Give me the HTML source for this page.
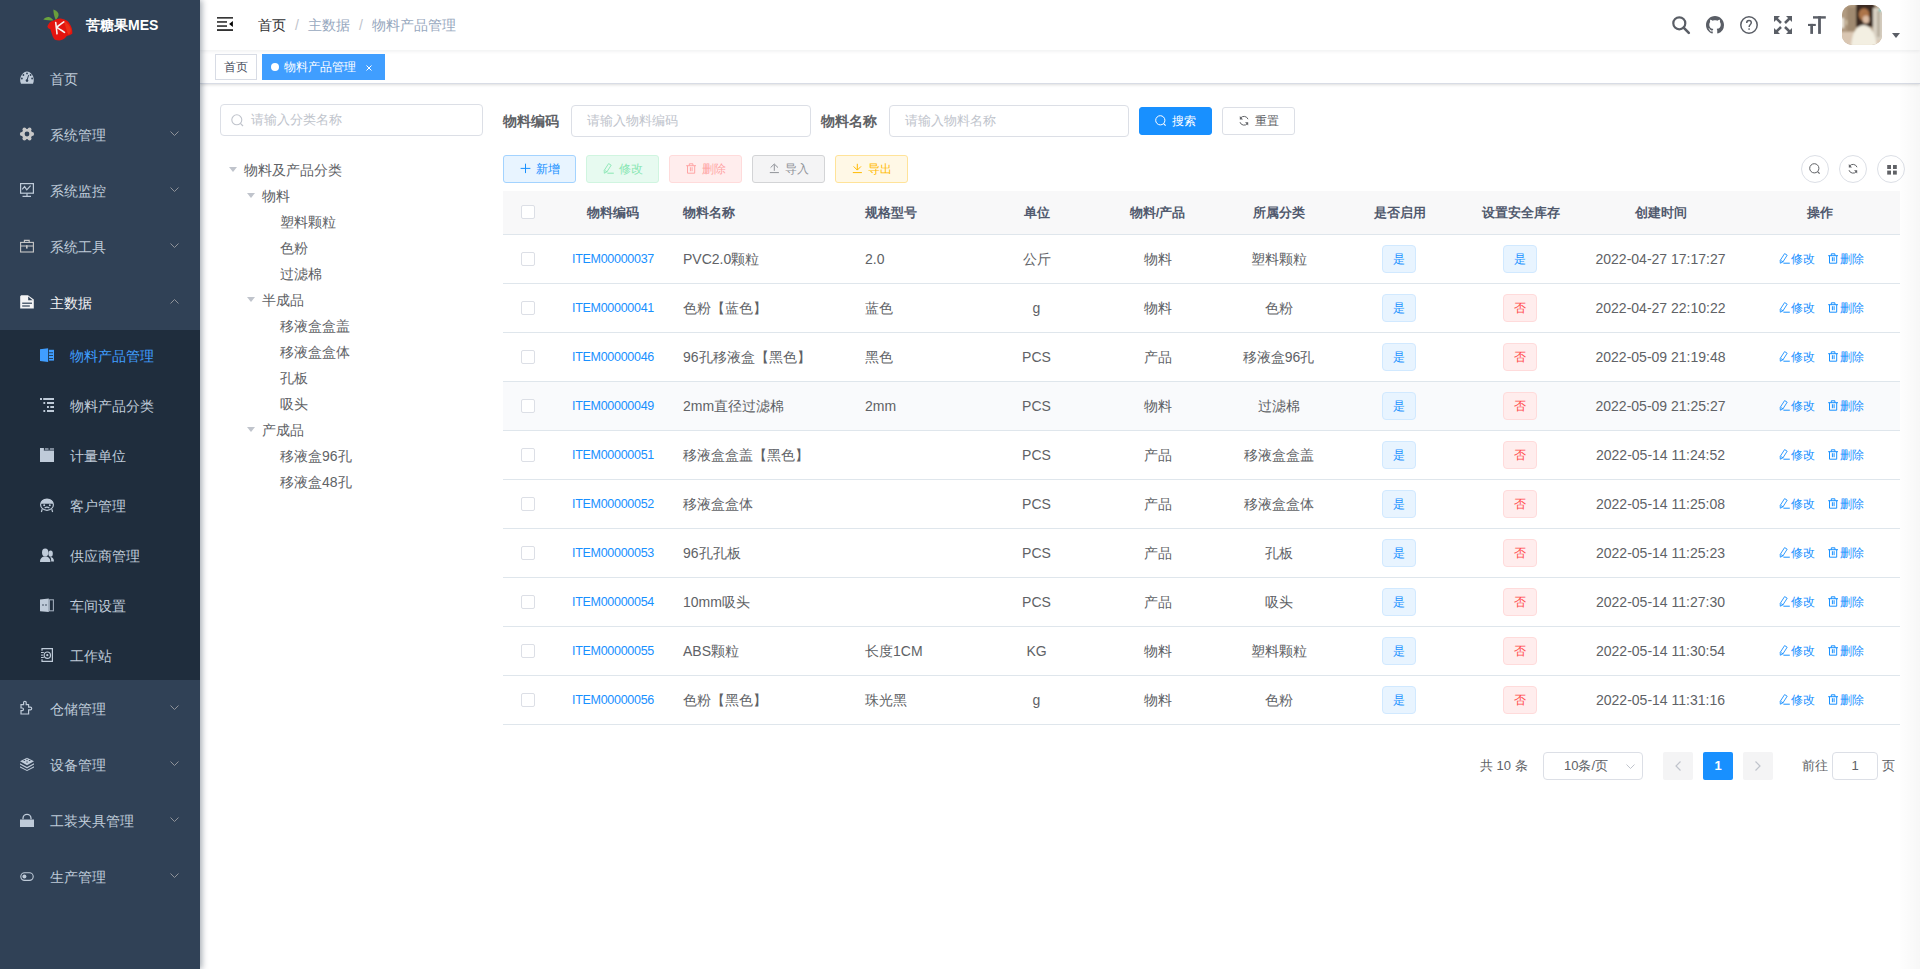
<!DOCTYPE html><html><head><meta charset="utf-8"><style>
*{box-sizing:border-box;margin:0;padding:0}
html,body{width:1920px;height:969px;overflow:hidden;background:#fff;font-family:"Liberation Sans",sans-serif;font-size:14px;color:#606266}
.abs{position:absolute}
svg{display:block;overflow:visible}
#sb{position:absolute;left:0;top:0;width:200px;height:969px;background:#304156;box-shadow:2px 0 6px rgba(0,21,41,.35);z-index:10}
.logo .t{position:absolute;left:86px;top:0;line-height:50px;color:#fff;font-weight:bold;font-size:14px}
.mi{position:absolute;left:0;width:200px;height:56px;line-height:56px;color:#bfcbd9;font-size:14px}
.mi svg.ic{position:absolute;left:20px;width:14px;height:14px}
.mi .tx{position:absolute;left:50px;top:1px}
.mi svg.ar{position:absolute;left:170px;top:25px;width:9px;height:5px}
.sub{position:absolute;left:0;top:330px;width:200px;height:350px;background:#1f2d3d}
.si{position:absolute;left:0;width:200px;height:50px;line-height:50px;color:#bfcbd9}
.si svg.ic{position:absolute;left:40px;top:18px;width:14px;height:14px}
.si .tx{position:absolute;left:70px;top:1px}
.si.act{color:#409eff}
#nav{position:absolute;left:200px;top:0;width:1720px;height:50px;background:#fff;box-shadow:0 1px 4px rgba(0,21,41,.08);z-index:5}
#nav .bc{position:absolute;top:0;line-height:50px;font-size:14px}
#tags{position:absolute;left:200px;top:50px;width:1720px;height:34px;background:#fff;border-bottom:1px solid #d8dce5;box-shadow:0 1px 3px 0 rgba(0,0,0,.12),0 0 3px 0 rgba(0,0,0,.04);z-index:4}
.tag{position:absolute;top:4px;height:26px;line-height:24px;border:1px solid #d8dce5;color:#495060;background:#fff;font-size:12px;padding:0 8px;white-space:nowrap}
.tag.act{background:#409eff;border-color:#409eff;color:#fff;padding-left:21px}
.tag.act:before{content:"";position:absolute;left:8px;top:8px;width:8px;height:8px;border-radius:50%;background:#fff}
.inp{position:absolute;height:32px;border:1px solid #dcdfe6;border-radius:4px;background:#fff;color:#c0c4cc;font-size:13px;line-height:30px;white-space:nowrap}
.lbl{position:absolute;height:32px;line-height:32px;font-weight:bold;color:#606266;font-size:14px}
.btn{position:absolute;height:28px;border:1px solid;border-radius:3px;font-size:12px;line-height:26px;white-space:nowrap}
.btn svg{position:absolute;top:7px;width:12px;height:12px}
.btn .bt{position:absolute;top:0}
.tn{position:absolute;height:26px;line-height:26px;font-size:14px;color:#606266;white-space:nowrap}
.tn svg{position:absolute;top:10px;width:8px;height:6px}
.th{position:absolute;top:191px;height:44px;background:#f8f8f9;border-bottom:1px solid #dfe6ec}
.cell{position:absolute;white-space:nowrap}
.hc{font-weight:bold;color:#515a6e;font-size:13px;line-height:43px;top:0}
.row{position:absolute;left:503px;width:1397px;height:49px;border-bottom:1px solid #dfe6ec;background:#fff}
.row .cell{top:0;line-height:48px;font-size:14px;color:#606266}
.cb{position:absolute;width:14px;height:14px;border:1px solid #dcdfe6;border-radius:2px;background:#fff}
.etag{position:absolute;top:10px;height:28px;width:34px;line-height:26px;text-align:center;font-size:12px;border:1px solid;border-radius:4px}
.etag.p{background:#e8f4ff;border-color:#d1e9ff;color:#1890ff}
.etag.d{background:#ffeded;border-color:#ffdbdb;color:#ff4949}
.lnk{position:absolute;top:0;line-height:48px;font-size:12px;color:#1890ff;white-space:nowrap}
.lnk svg{position:absolute;top:18px;width:12px;height:12px}
.num{letter-spacing:-0.55px}
.circ{position:absolute;top:155px;width:28px;height:28px;border:1px solid #dcdfe6;border-radius:50%;background:#fff}
.circ svg{position:absolute;left:7px;top:7px;width:12px;height:12px}
.pg{position:absolute;top:752px;height:28px;line-height:28px;font-size:13px;color:#606266;white-space:nowrap}
</style></head><body>
<div id="sb"><div class="logo">
<svg class="abs" style="left:42px;top:9px;width:32px;height:32px;filter:blur(0.25px)" viewBox="0 0 32 32">
<path d="M13.6 10.8 C12.4 7.5 11.2 4 11.4 0.6 C14.5 1.8 16.8 3.8 16.6 6 C16.4 8.2 15 9.8 13.6 10.8Z" fill="#6a9e3c"/>
<path d="M11.4 11.6 C8.5 11.4 4.5 11.6 1.3 10.6 C2.8 8.4 5.4 7.6 7.6 8.2 C9.4 8.8 10.6 10.2 11.4 11.6Z" fill="#6aa23e"/>
<path d="M5.4 17.3 C6.2 15.6 7 14.2 7.7 13.6 C8.6 12.8 9.4 12.4 10.3 12.1 C12 11.4 13.6 10.6 15.1 9.9 C16.4 9.5 17.6 9.3 18.8 9.5 C21.4 9.9 23.8 10.8 25.5 12.1 C27.4 14 28.8 16.4 29.6 18.8 C30.2 20.8 30.5 23 30.3 24.8 C28.6 26 26.6 26.6 24.8 27 C23.8 28.2 22.8 29.2 21.8 30 C20.4 30.9 18.8 31.4 17.3 31.5 C15.6 31.5 14.2 31.2 12.9 30.7 C11.6 29.4 10.8 28 10.3 26.3 C9.6 24.4 9 22.2 8.4 20.3 C7.6 19.9 6.8 19.6 6.2 19.2 C5.8 18.6 5.5 18 5.4 17.3Z" fill="#e3150f"/>
<path d="M22 12 C25 13.4 28 16.5 28.8 20 C29.2 22.5 28.4 24.6 26.4 25.6 C24.6 22 23.4 17 22 12Z" fill="#ee3a1a" opacity=".7"/>
<path d="M13.7 13.6 C14.2 17 14.6 21 15 24.8 M14.7 18.2 C17 16.6 19.4 14.6 21.8 12.9 M15.6 18.8 C17.8 20.2 20.2 21.8 22.5 23.3" stroke="#f8f2f0" stroke-width="1.6" fill="none" stroke-linecap="round"/>
</svg>
<div class="t">苦糖果MES</div></div>
<div class="mi" style="top:50px"><svg class="ic" viewBox="0 0 14 14" style="top:21px"><path d="M1 12.8 C-0.4 10 0 6 2 3.6 C3.5 1.6 5.2 0.6 7 0.6 C8.8 0.6 10.5 1.6 12 3.6 C14 6 14.4 10 13 12.8 Z" fill="#bfcbd9"/><circle cx="3.4" cy="4" r="0.9" fill="#304156"/><circle cx="7" cy="2.4" r="0.9" fill="#304156"/><circle cx="10.6" cy="4" r="0.9" fill="#304156"/><circle cx="1.9" cy="7.5" r="0.9" fill="#304156"/><circle cx="12.1" cy="7.5" r="0.9" fill="#304156"/><path d="M7 9.3 L8.6 4.2" stroke="#304156" stroke-width="1"/><circle cx="7" cy="9.6" r="1.3" fill="#304156"/></svg><span class="tx">首页</span></div>
<div class="mi" style="top:106px"><svg class="ic" viewBox="0 0 14 14" style="top:21px"><g fill="#c8c8c8"><circle cx="12.20" cy="7.00" r="1.9"/><circle cx="9.60" cy="11.50" r="1.9"/><circle cx="4.40" cy="11.50" r="1.9"/><circle cx="1.80" cy="7.00" r="1.9"/><circle cx="4.40" cy="2.50" r="1.9"/><circle cx="9.60" cy="2.50" r="1.9"/><circle cx="7" cy="7" r="5.3"/></g><circle cx="7" cy="7" r="2.4" fill="#304156"/></svg><span class="tx">系统管理</span><svg class="ar" viewBox="0 0 9 5" style=""><path d="M0.5 0.5L4.5 4.5L8.5 0.5" fill="none" stroke="#909399" stroke-width="1"/></svg></div>
<div class="mi" style="top:162px"><svg class="ic" viewBox="0 0 14 14" style="top:21px"><g fill="none" stroke="#bfcbd9" stroke-width="1.2"><rect x="0.6" y="0.6" width="12.8" height="9.6"/><path d="M7 10.2V13.3M2.5 13.3H11"/><path d="M2.2 6.4L4.6 3.6L6.8 6.8L10.6 2.6"/></g></svg><span class="tx">系统监控</span><svg class="ar" viewBox="0 0 9 5" style=""><path d="M0.5 0.5L4.5 4.5L8.5 0.5" fill="none" stroke="#909399" stroke-width="1"/></svg></div>
<div class="mi" style="top:218px"><svg class="ic" viewBox="0 0 14 14" style="top:21px"><g fill="none" stroke="#c8c8c8" stroke-width="1.1"><rect x="0.6" y="3.4" width="12.8" height="9.6"/><path d="M4.4 3.4V1.4H9.2V3.4M0.6 7H13.4"/></g><rect x="6" y="6.2" width="1.6" height="3.4" fill="#c8c8c8"/></svg><span class="tx">系统工具</span><svg class="ar" viewBox="0 0 9 5" style=""><path d="M0.5 0.5L4.5 4.5L8.5 0.5" fill="none" stroke="#909399" stroke-width="1"/></svg></div>
<div class="mi" style="top:274px;color:#f4f4f5"><svg class="ic" viewBox="0 0 14 14" style="top:21px"><path d="M1.2 0.2H8L13.8 4.6V13.6H0.2V1.2Z" fill="#f4f4f5"/><path d="M8.2 1.5V5.2H12.6Z" fill="#304156"/><rect x="2.2" y="7.6" width="9.8" height="1.2" fill="#304156"/><rect x="2.2" y="10.4" width="7.6" height="1.2" fill="#304156"/></svg><span class="tx">主数据</span><svg class="ar" viewBox="0 0 9 5" style=""><path d="M0.5 4.5L4.5 0.5L8.5 4.5" fill="none" stroke="#909399" stroke-width="1"/></svg></div>
<div class="sub">
<div class="si act" style="top:0px"><svg class="ic" viewBox="0 0 14 14" style=""><g fill="#409eff"><path d="M0 1.3L8.1 0.2V14L0 12.9Z"/><rect x="8.9" y="1.8" width="5.1" height="10.8"/></g><g fill="#1f2d3d"><rect x="9" y="4.4" width="4" height="0.8"/><rect x="9" y="7.2" width="4" height="0.8"/><rect x="9" y="10.1" width="4" height="0.8"/></g></svg><span class="tx">物料产品管理</span></div>
<div class="si" style="top:50px"><svg class="ic" viewBox="0 0 14 14" style=""><g fill="#bfcbd9"><rect x="0" y="0" width="2" height="2"/><rect x="3.2" y="0" width="10.8" height="2"/><rect x="3.4" y="4" width="1.8" height="2"/><rect x="7" y="4" width="7" height="2"/><rect x="7" y="8" width="1.9" height="2"/><rect x="10.3" y="8" width="3.7" height="2"/><rect x="3.4" y="12" width="1.8" height="2"/><rect x="7" y="12" width="7" height="2"/></g></svg><span class="tx">物料产品分类</span></div>
<div class="si" style="top:100px"><svg class="ic" viewBox="0 0 14 14" style=""><g fill="#bfcbd9"><path d="M0 0H3.9V3H14V14H0Z"/><rect x="4.9" y="0.4" width="3.6" height="1.2"/><rect x="9.9" y="0.4" width="4.1" height="1.2"/></g><rect x="4.1" y="1.8" width="9.9" height="1.2" fill="#6b7888"/></svg><span class="tx">计量单位</span></div>
<div class="si" style="top:150px"><svg class="ic" viewBox="0 0 14 14" style=""><g fill="none" stroke="#bfcbd9" stroke-width="1.2"><ellipse cx="7" cy="6.7" rx="6.4" ry="5.6"/><path d="M2.2 11.2L1.4 14M11.8 11.2L12.6 14"/></g><path d="M0.7 5.8C0.9 2.8 3.6 1.1 7 1.1S13.1 2.8 13.3 5.8Z" fill="#bfcbd9"/><circle cx="4.2" cy="7.2" r="1" fill="#bfcbd9"/><circle cx="9.8" cy="7.2" r="1" fill="#bfcbd9"/><path d="M4.6 10C6 9 8 9 9.4 10" stroke="#bfcbd9" stroke-width="1.1" fill="none"/></svg><span class="tx">客户管理</span></div>
<div class="si" style="top:200px"><svg class="ic" viewBox="0 0 14 14" style=""><g fill="#bfcbd9"><ellipse cx="5.2" cy="4.4" rx="3.2" ry="4"/><path d="M0 14C0 10.5 2 8.6 5.2 8.6S10.4 10.5 10.4 14Z"/><ellipse cx="10.6" cy="5.6" rx="2.2" ry="3.2"/><path d="M10 8.8C12.4 9 14 10.6 14 13.4H11.2C11.2 11.2 10.8 9.8 10 8.8Z"/></g></svg><span class="tx">供应商管理</span></div>
<div class="si" style="top:250px"><svg class="ic" viewBox="0 0 14 14" style=""><path d="M0 1.6L8.8 0.4V14L0 13.2Z" fill="#bfcbd9"/><rect x="9.4" y="1.8" width="4" height="11" fill="none" stroke="#bfcbd9" stroke-width="1.1" opacity="0.8"/><circle cx="3" cy="7" r="1" fill="#6b7888"/><circle cx="6" cy="7" r="1" fill="#6b7888"/></svg><span class="tx">车间设置</span></div>
<div class="si" style="top:300px"><svg class="ic" viewBox="0 0 14 14" style=""><g fill="none" stroke="#bfcbd9" stroke-width="1.2"><path d="M2 2.8V0.6H12.4V13.4H2V11.2"/><circle cx="7.3" cy="7.2" r="3.2"/></g><g fill="#bfcbd9"><rect x="1" y="4" width="2.8" height="1"/><rect x="1" y="6.6" width="2" height="1"/><rect x="1" y="9" width="2.8" height="1"/><circle cx="7.3" cy="7.2" r="1.1"/></g></svg><span class="tx">工作站</span></div>
</div>
<div class="mi" style="top:680px"><svg class="ic" viewBox="0 0 14 14" style="top:21px"><path d="M1 3.6H3.6V1.6A1.3 1.3 0 0 1 6.2 1.6V3.6H8.6V6.2H10.4A1.3 1.3 0 0 1 10.4 8.8H8.6V13H1V9.6H2.2A1.3 1.3 0 0 0 2.2 7H1Z" fill="none" stroke="#bfcbd9" stroke-width="1.2"/></svg><span class="tx">仓储管理</span><svg class="ar" viewBox="0 0 9 5" style=""><path d="M0.5 0.5L4.5 4.5L8.5 0.5" fill="none" stroke="#909399" stroke-width="1"/></svg></div>
<div class="mi" style="top:736px"><svg class="ic" viewBox="0 0 14 14" style="top:21px"><g fill="#bfcbd9"><path d="M7 0.8L14 4.2L7 8.2L0 4.2Z"/><path d="M0 6.2L7 10L14 6.2V7.6L7 11.4L0 7.6Z"/><path d="M0 9.2L7 13L14 9.2V10.6L7 14L0 10.6Z"/></g><g fill="#304156"><ellipse cx="4.3" cy="3.6" rx="0.9" ry="0.5"/><ellipse cx="9.6" cy="3.6" rx="0.9" ry="0.5"/><ellipse cx="7" cy="2.3" rx="0.9" ry="0.5"/><ellipse cx="7" cy="4.9" rx="0.9" ry="0.5"/></g></svg><span class="tx">设备管理</span><svg class="ar" viewBox="0 0 9 5" style=""><path d="M0.5 0.5L4.5 4.5L8.5 0.5" fill="none" stroke="#909399" stroke-width="1"/></svg></div>
<div class="mi" style="top:792px"><svg class="ic" viewBox="0 0 14 14" style="top:21px"><path d="M3 6.2V5.3A4 4 0 0 1 11 5.3V6.2" fill="none" stroke="#bfcbd9" stroke-width="1.3"/><rect x="0" y="6.5" width="14" height="7.5" fill="#bfcbd9"/></svg><span class="tx">工装夹具管理</span><svg class="ar" viewBox="0 0 9 5" style=""><path d="M0.5 0.5L4.5 4.5L8.5 0.5" fill="none" stroke="#909399" stroke-width="1"/></svg></div>
<div class="mi" style="top:848px"><svg class="ic" viewBox="0 0 14 14" style="top:21px"><rect x="0.8" y="3.8" width="12.4" height="7.6" rx="3.8" fill="none" stroke="#bfcbd9" stroke-width="1.1"/><circle cx="4.4" cy="7.6" r="2" fill="#bfcbd9"/></svg><span class="tx">生产管理</span><svg class="ar" viewBox="0 0 9 5" style=""><path d="M0.5 0.5L4.5 4.5L8.5 0.5" fill="none" stroke="#909399" stroke-width="1"/></svg></div>
</div>
<div id="nav">
<svg class="abs" style="left:17px;top:17px;width:17px;height:14px" viewBox="0 0 17 14"><g fill="#222"><rect x="0" y="0.1" width="16" height="1.5"/><rect x="0" y="4.2" width="10" height="1.5"/><rect x="0" y="8.3" width="10" height="1.5"/><rect x="0" y="12.3" width="16" height="1.5" fill="#000"/><path d="M15.9 4.1V10L12.1 7Z" fill="#000"/></g></svg>
<span class="bc" style="left:58px;color:#303133">首页</span>
<span class="bc" style="left:95px;color:#c0c4cc">/</span>
<span class="bc" style="left:108px;color:#97a8be">主数据</span>
<span class="bc" style="left:159px;color:#c0c4cc">/</span>
<span class="bc" style="left:172px;color:#97a8be">物料产品管理</span>
<svg class="abs" style="left:1472px;top:16px;width:18px;height:18px" viewBox="0 0 18 18"><circle cx="7.3" cy="7.3" r="6" fill="none" stroke="#5a5e66" stroke-width="2.2"/><path d="M11.6 11.6L16.8 16.8" stroke="#5a5e66" stroke-width="2.6" stroke-linecap="round"/></svg>
<svg class="abs" style="left:1506px;top:16px;width:18px;height:18px" viewBox="0 0 16 16"><path fill="#5a5e66" d="M8 0C3.58 0 0 3.58 0 8c0 3.54 2.29 6.53 5.47 7.59.4.07.55-.17.55-.38 0-.19-.01-.82-.01-1.49-2.01.37-2.53-.49-2.69-.94-.09-.23-.48-.94-.82-1.13-.28-.15-.68-.52-.01-.53.63-.01 1.08.58 1.23.82.72 1.21 1.87.87 2.33.66.07-.52.28-.87.51-1.07-1.78-.2-3.64-.89-3.64-3.95 0-.87.31-1.59.82-2.15-.08-.2-.36-1.02.08-2.12 0 0 .67-.21 2.2.82.64-.18 1.32-.27 2-.27.68 0 1.36.09 2 .27 1.53-1.04 2.2-.82 2.2-.82.44 1.1.16 1.92.08 2.12.51.56.82 1.27.82 2.15 0 3.07-1.87 3.75-3.65 3.95.29.25.54.73.54 1.48 0 1.07-.01 1.93-.01 2.2 0 .21.15.46.55.38A8.013 8.013 0 0016 8c0-4.42-3.58-8-8-8z"/></svg>
<svg class="abs" style="left:1540px;top:16px;width:18px;height:18px" viewBox="0 0 18 18"><circle cx="9" cy="9" r="8.2" fill="none" stroke="#5a5e66" stroke-width="1.5"/><path d="M6.7 6.9C6.7 5.4 7.8 4.5 9 4.5S11.3 5.4 11.3 6.7C11.3 8.4 9.1 8.5 9.1 11" fill="none" stroke="#5a5e66" stroke-width="1.45"/><rect x="8.3" y="12.4" width="1.6" height="1.3" fill="#5a5e66"/></svg>
<svg class="abs" style="left:1574px;top:16px;width:18px;height:18px" viewBox="0 0 18 18"><g fill="#5a5e66"><path d="M0 0H6L0 6Z"/><path d="M18 0H12L18 6Z"/><path d="M0 18H6L0 12Z"/><path d="M18 18H12L18 12Z"/></g><path d="M2 2L7 7M16 2L11 7M2 16L7 11M16 16L11 11" stroke="#5a5e66" stroke-width="2.5"/></svg>
<svg class="abs" style="left:1608px;top:16px;width:18px;height:18px" viewBox="0 0 18 18"><g fill="#5a5e66"><rect x="5" y="0.2" width="12.8" height="2.4"/><rect x="10.1" y="0.2" width="2.8" height="17.7"/><rect x="0" y="7.9" width="7.8" height="2.1"/><rect x="2.3" y="7.9" width="2.7" height="10"/></g></svg>
<div class="abs" style="left:1642px;top:5px;width:40px;height:40px;border-radius:10px;overflow:hidden;background:#b9a48c">
<svg viewBox="0 0 40 40" width="40" height="40" style="display:block">
<defs><filter id="bl" x="-20%" y="-20%" width="140%" height="140%"><feGaussianBlur stdDeviation="1.1"/></filter></defs>
<g filter="url(#bl)">
<rect x="-5" y="-5" width="50" height="50" fill="#b09a80"/>
<rect x="-5" y="27" width="50" height="20" fill="#d9c6b2"/>
<rect x="-5" y="13" width="7" height="10" fill="#ece6da"/>
<rect x="4" y="15" width="4" height="5" fill="#e8dcc0"/>
<rect x="5" y="2" width="9" height="24" fill="#a08a70"/>
<rect x="14" y="-5" width="19" height="27" fill="#3a2c20"/>
<rect x="-5" y="-5" width="50" height="3" fill="#1e1610"/>
<rect x="31" y="3" width="10" height="32" fill="#d8d0c2"/>
<rect x="35.5" y="6" width="2" height="26" fill="#aaa08e"/>
<ellipse cx="22" cy="9.5" rx="5.2" ry="6.2" fill="#ad7448"/>
<ellipse cx="24" cy="14.5" rx="3.4" ry="4" fill="#dcbba2"/>
<path d="M9 41 C10 30 13 21 21 20 C29 20 33 28 35 41Z" fill="#f3efe2"/>
<circle cx="38.5" cy="5" r="1.4" fill="#40d0d0"/>
</g></svg></div>
<svg class="abs" style="left:1692px;top:33px;width:8px;height:5px" viewBox="0 0 8 5"><path d="M0 0H8L4 5Z" fill="#5a5e66"/></svg>
</div>
<div id="tags"><div class="tag" style="left:15px">首页</div><div class="tag act" style="left:62px;width:123px">物料产品管理<svg class="abs" style="left:103px;top:10px;width:6px;height:6px" viewBox="0 0 6 6"><path d="M0.5 0.5L5.5 5.5M5.5 0.5L0.5 5.5" stroke="#fff" stroke-width="1"/></svg></div></div>
<div class="inp" style="left:220px;top:104px;width:263px;padding-left:30px">请输入分类名称<svg class="abs" style="left:10px;top:9px;width:13px;height:13px" viewBox="0 0 13 13"><circle cx="5.8" cy="5.8" r="5" fill="none" stroke="#c0c4cc" stroke-width="1.1"/><path d="M9.4 9.4L12 12" stroke="#c0c4cc" stroke-width="1.2"/></svg></div>
<div class="tn" style="left:244px;top:157px">物料及产品分类</div>
<svg class="abs" style="left:229px;top:167px;width:8px;height:5px" viewBox="0 0 8 5"><path d="M0 0H8L4 5Z" fill="#c0c4cc"/></svg>
<div class="tn" style="left:262px;top:183px">物料</div>
<svg class="abs" style="left:247px;top:193px;width:8px;height:5px" viewBox="0 0 8 5"><path d="M0 0H8L4 5Z" fill="#c0c4cc"/></svg>
<div class="tn" style="left:280px;top:209px">塑料颗粒</div>
<div class="tn" style="left:280px;top:235px">色粉</div>
<div class="tn" style="left:280px;top:261px">过滤棉</div>
<div class="tn" style="left:262px;top:287px">半成品</div>
<svg class="abs" style="left:247px;top:297px;width:8px;height:5px" viewBox="0 0 8 5"><path d="M0 0H8L4 5Z" fill="#c0c4cc"/></svg>
<div class="tn" style="left:280px;top:313px">移液盒盒盖</div>
<div class="tn" style="left:280px;top:339px">移液盒盒体</div>
<div class="tn" style="left:280px;top:365px">孔板</div>
<div class="tn" style="left:280px;top:391px">吸头</div>
<div class="tn" style="left:262px;top:417px">产成品</div>
<svg class="abs" style="left:247px;top:427px;width:8px;height:5px" viewBox="0 0 8 5"><path d="M0 0H8L4 5Z" fill="#c0c4cc"/></svg>
<div class="tn" style="left:280px;top:443px">移液盒96孔</div>
<div class="tn" style="left:280px;top:469px">移液盒48孔</div>
<div class="lbl" style="left:503px;top:105px">物料编码</div>
<div class="inp" style="left:571px;top:105px;width:240px;padding-left:15px">请输入物料编码</div>
<div class="lbl" style="left:821px;top:105px">物料名称</div>
<div class="inp" style="left:889px;top:105px;width:240px;padding-left:15px">请输入物料名称</div>
<div class="btn" style="left:1139px;top:107px;width:73px;background:#1890ff;border-color:#1890ff;color:#fff"><svg viewBox="0 0 12 12" style="left:15px"><circle cx="5.3" cy="5.3" r="4.6" fill="none" stroke="#fff" stroke-width="1"/><path d="M8.6 8.6L10.6 10.6" stroke="#fff" stroke-width="1.1"/></svg><span class="bt" style="left:32px">搜索</span></div>
<div class="btn" style="left:1222px;top:107px;width:73px;background:#fff;border-color:#dcdfe6;color:#606266"><svg viewBox="0 0 12 12" style="left:15px"><path d="M10 4.2A4.3 4.3 0 0 0 2.6 3" fill="none" stroke="#606266" stroke-width="1"/><path d="M2 7.2A4.3 4.3 0 0 0 9.4 8.6" fill="none" stroke="#606266" stroke-width="1"/><path d="M1.8 1V4.4H5Z" fill="#606266"/><path d="M10.2 10.6V7.2H7Z" fill="#606266"/></svg><span class="bt" style="left:32px">重置</span></div>
<div class="btn" style="left:503px;top:155px;width:73px;background:#e8f4ff;border-color:#a3d3ff;color:#1890ff"><svg viewBox="0 0 12 12" style="left:15px"><path d="M6.5 0.7V10.1M1.6 5.4H11.4" stroke="#1890ff" stroke-width="1"/></svg><span class="bt" style="left:32px">新增</span></div>
<div class="btn" style="left:586px;top:155px;width:73px;background:#e7faf0;border-color:#d0f5e0;color:#89e7b3"><svg viewBox="0 0 12 12" style="left:15px"><path d="M2.3 10.2L2.2 7.4L6.6 0.6L9.2 2.2L4.8 9Z M2.8 7.6L5.2 8.8" fill="none" stroke="#89e7b3" stroke-width="0.9"/><path d="M5.4 10.2H11.8" stroke="#89e7b3" stroke-width="1"/></svg><span class="bt" style="left:32px">修改</span></div>
<div class="btn" style="left:669px;top:155px;width:73px;background:#ffeded;border-color:#ffdbdb;color:#ffa4a4"><svg viewBox="0 0 12 12" style="left:15px"><path d="M1.2 2.7H11M4.3 2.7V0.8H7.9V2.7M2.5 2.7V10.2H9.7V2.7M5.4 4.2V8.2M7.1 4.2V8.2" fill="none" stroke="#ffa4a4" stroke-width="1"/></svg><span class="bt" style="left:32px">删除</span></div>
<div class="btn" style="left:752px;top:155px;width:73px;background:#f4f4f5;border-color:#d3d4d6;color:#909399"><svg viewBox="0 0 12 12" style="left:15px"><path d="M6.3 1.4V7.8M2.6 4.6L6.3 1L10 4.6M1.8 9.6H10.9" fill="none" stroke="#909399" stroke-width="1"/></svg><span class="bt" style="left:32px">导入</span></div>
<div class="btn" style="left:835px;top:155px;width:73px;background:#fff8e6;border-color:#ffe399;color:#ffba00"><svg viewBox="0 0 12 12" style="left:15px"><path d="M6.3 0.8V7M2.6 3.4L6.3 7.1L10 3.4M1.8 9.6H10.9" fill="none" stroke="#ffba00" stroke-width="1"/></svg><span class="bt" style="left:32px">导出</span></div>
<div class="circ" style="left:1801px"><svg viewBox="0 0 12 12" style="left:7px"><circle cx="5.3" cy="5.3" r="4.6" fill="none" stroke="#606266" stroke-width="1"/><path d="M8.6 8.6L10.6 10.6" stroke="#606266" stroke-width="1.1"/></svg></div>
<div class="circ" style="left:1839px"><svg viewBox="0 0 12 12" style="left:7px"><path d="M10 4.2A4.3 4.3 0 0 0 2.6 3" fill="none" stroke="#606266" stroke-width="1"/><path d="M2 7.2A4.3 4.3 0 0 0 9.4 8.6" fill="none" stroke="#606266" stroke-width="1"/><path d="M1.8 1V4.4H5Z" fill="#606266"/><path d="M10.2 10.6V7.2H7Z" fill="#606266"/></svg></div>
<div class="circ" style="left:1877px"><svg viewBox="0 0 12 12" style="left:7px"><g fill="#606266"><rect x="2.2" y="2" width="3.8" height="4"/><rect x="8" y="2" width="3.8" height="4"/><rect x="2.2" y="7.6" width="3.8" height="4"/><rect x="8" y="7.6" width="3.8" height="4"/></g></svg></div>
<div class="th" style="left:503px;width:1397px">
<div class="cb" style="left:18.0px;top:14px"></div>
<div class="cell hc" style="left:50px;width:120px;text-align:center">物料编码</div>
<div class="cell hc" style="left:180px">物料名称</div>
<div class="cell hc" style="left:362px">规格型号</div>
<div class="cell hc" style="left:473px;width:121px;text-align:center">单位</div>
<div class="cell hc" style="left:594px;width:121px;text-align:center">物料/产品</div>
<div class="cell hc" style="left:715px;width:121px;text-align:center">所属分类</div>
<div class="cell hc" style="left:836px;width:121px;text-align:center">是否启用</div>
<div class="cell hc" style="left:957px;width:121px;text-align:center">设置安全库存</div>
<div class="cell hc" style="left:1078px;width:159px;text-align:center">创建时间</div>
<div class="cell hc" style="left:1237px;width:160px;text-align:center">操作</div>
</div>
<div class="row" style="top:235px">
<div class="cb" style="left:18.0px;top:17px"></div>
<div class="cell" style="left:50px;width:120px;text-align:center;color:#1890ff;font-size:12.5px;letter-spacing:-0.3px">ITEM00000037</div>
<div class="cell" style="left:180px">PVC2.0颗粒</div>
<div class="cell" style="left:362px">2.0</div>
<div class="cell" style="left:473px;width:121px;text-align:center">公斤</div>
<div class="cell" style="left:594px;width:121px;text-align:center">物料</div>
<div class="cell" style="left:715px;width:121px;text-align:center">塑料颗粒</div>
<div class="etag p" style="left:879px">是</div>
<div class="etag p" style="left:1000px">是</div>
<div class="cell" style="left:1078px;width:159px;text-align:center;font-size:14px">2022-04-27 17:17:27</div>
<div class="lnk" style="left:1275px"><svg viewBox="0 0 12 12" style="left:0"><path d="M2.3 10.2L2.2 7.4L6.6 0.6L9.2 2.2L4.8 9Z M2.8 7.6L5.2 8.8" fill="none" stroke="#1890ff" stroke-width="0.9"/><path d="M5.4 10.2H11.8" stroke="#1890ff" stroke-width="1"/></svg><span style="position:absolute;left:13px">修改</span></div>
<div class="lnk" style="left:1324px"><svg viewBox="0 0 12 12" style="left:0"><path d="M1.2 2.7H11M4.3 2.7V0.8H7.9V2.7M2.5 2.7V10.2H9.7V2.7M5.4 4.2V8.2M7.1 4.2V8.2" fill="none" stroke="#1890ff" stroke-width="1"/></svg><span style="position:absolute;left:13px">删除</span></div>
</div>
<div class="row" style="top:284px">
<div class="cb" style="left:18.0px;top:17px"></div>
<div class="cell" style="left:50px;width:120px;text-align:center;color:#1890ff;font-size:12.5px;letter-spacing:-0.3px">ITEM00000041</div>
<div class="cell" style="left:180px">色粉【蓝色】</div>
<div class="cell" style="left:362px">蓝色</div>
<div class="cell" style="left:473px;width:121px;text-align:center">g</div>
<div class="cell" style="left:594px;width:121px;text-align:center">物料</div>
<div class="cell" style="left:715px;width:121px;text-align:center">色粉</div>
<div class="etag p" style="left:879px">是</div>
<div class="etag d" style="left:1000px">否</div>
<div class="cell" style="left:1078px;width:159px;text-align:center;font-size:14px">2022-04-27 22:10:22</div>
<div class="lnk" style="left:1275px"><svg viewBox="0 0 12 12" style="left:0"><path d="M2.3 10.2L2.2 7.4L6.6 0.6L9.2 2.2L4.8 9Z M2.8 7.6L5.2 8.8" fill="none" stroke="#1890ff" stroke-width="0.9"/><path d="M5.4 10.2H11.8" stroke="#1890ff" stroke-width="1"/></svg><span style="position:absolute;left:13px">修改</span></div>
<div class="lnk" style="left:1324px"><svg viewBox="0 0 12 12" style="left:0"><path d="M1.2 2.7H11M4.3 2.7V0.8H7.9V2.7M2.5 2.7V10.2H9.7V2.7M5.4 4.2V8.2M7.1 4.2V8.2" fill="none" stroke="#1890ff" stroke-width="1"/></svg><span style="position:absolute;left:13px">删除</span></div>
</div>
<div class="row" style="top:333px">
<div class="cb" style="left:18.0px;top:17px"></div>
<div class="cell" style="left:50px;width:120px;text-align:center;color:#1890ff;font-size:12.5px;letter-spacing:-0.3px">ITEM00000046</div>
<div class="cell" style="left:180px">96孔移液盒【黑色】</div>
<div class="cell" style="left:362px">黑色</div>
<div class="cell" style="left:473px;width:121px;text-align:center">PCS</div>
<div class="cell" style="left:594px;width:121px;text-align:center">产品</div>
<div class="cell" style="left:715px;width:121px;text-align:center">移液盒96孔</div>
<div class="etag p" style="left:879px">是</div>
<div class="etag d" style="left:1000px">否</div>
<div class="cell" style="left:1078px;width:159px;text-align:center;font-size:14px">2022-05-09 21:19:48</div>
<div class="lnk" style="left:1275px"><svg viewBox="0 0 12 12" style="left:0"><path d="M2.3 10.2L2.2 7.4L6.6 0.6L9.2 2.2L4.8 9Z M2.8 7.6L5.2 8.8" fill="none" stroke="#1890ff" stroke-width="0.9"/><path d="M5.4 10.2H11.8" stroke="#1890ff" stroke-width="1"/></svg><span style="position:absolute;left:13px">修改</span></div>
<div class="lnk" style="left:1324px"><svg viewBox="0 0 12 12" style="left:0"><path d="M1.2 2.7H11M4.3 2.7V0.8H7.9V2.7M2.5 2.7V10.2H9.7V2.7M5.4 4.2V8.2M7.1 4.2V8.2" fill="none" stroke="#1890ff" stroke-width="1"/></svg><span style="position:absolute;left:13px">删除</span></div>
</div>
<div class="row" style="top:382px;background:#f9fafc">
<div class="cb" style="left:18.0px;top:17px"></div>
<div class="cell" style="left:50px;width:120px;text-align:center;color:#1890ff;font-size:12.5px;letter-spacing:-0.3px">ITEM00000049</div>
<div class="cell" style="left:180px">2mm直径过滤棉</div>
<div class="cell" style="left:362px">2mm</div>
<div class="cell" style="left:473px;width:121px;text-align:center">PCS</div>
<div class="cell" style="left:594px;width:121px;text-align:center">物料</div>
<div class="cell" style="left:715px;width:121px;text-align:center">过滤棉</div>
<div class="etag p" style="left:879px">是</div>
<div class="etag d" style="left:1000px">否</div>
<div class="cell" style="left:1078px;width:159px;text-align:center;font-size:14px">2022-05-09 21:25:27</div>
<div class="lnk" style="left:1275px"><svg viewBox="0 0 12 12" style="left:0"><path d="M2.3 10.2L2.2 7.4L6.6 0.6L9.2 2.2L4.8 9Z M2.8 7.6L5.2 8.8" fill="none" stroke="#1890ff" stroke-width="0.9"/><path d="M5.4 10.2H11.8" stroke="#1890ff" stroke-width="1"/></svg><span style="position:absolute;left:13px">修改</span></div>
<div class="lnk" style="left:1324px"><svg viewBox="0 0 12 12" style="left:0"><path d="M1.2 2.7H11M4.3 2.7V0.8H7.9V2.7M2.5 2.7V10.2H9.7V2.7M5.4 4.2V8.2M7.1 4.2V8.2" fill="none" stroke="#1890ff" stroke-width="1"/></svg><span style="position:absolute;left:13px">删除</span></div>
</div>
<div class="row" style="top:431px">
<div class="cb" style="left:18.0px;top:17px"></div>
<div class="cell" style="left:50px;width:120px;text-align:center;color:#1890ff;font-size:12.5px;letter-spacing:-0.3px">ITEM00000051</div>
<div class="cell" style="left:180px">移液盒盒盖【黑色】</div>
<div class="cell" style="left:362px"></div>
<div class="cell" style="left:473px;width:121px;text-align:center">PCS</div>
<div class="cell" style="left:594px;width:121px;text-align:center">产品</div>
<div class="cell" style="left:715px;width:121px;text-align:center">移液盒盒盖</div>
<div class="etag p" style="left:879px">是</div>
<div class="etag d" style="left:1000px">否</div>
<div class="cell" style="left:1078px;width:159px;text-align:center;font-size:14px">2022-05-14 11:24:52</div>
<div class="lnk" style="left:1275px"><svg viewBox="0 0 12 12" style="left:0"><path d="M2.3 10.2L2.2 7.4L6.6 0.6L9.2 2.2L4.8 9Z M2.8 7.6L5.2 8.8" fill="none" stroke="#1890ff" stroke-width="0.9"/><path d="M5.4 10.2H11.8" stroke="#1890ff" stroke-width="1"/></svg><span style="position:absolute;left:13px">修改</span></div>
<div class="lnk" style="left:1324px"><svg viewBox="0 0 12 12" style="left:0"><path d="M1.2 2.7H11M4.3 2.7V0.8H7.9V2.7M2.5 2.7V10.2H9.7V2.7M5.4 4.2V8.2M7.1 4.2V8.2" fill="none" stroke="#1890ff" stroke-width="1"/></svg><span style="position:absolute;left:13px">删除</span></div>
</div>
<div class="row" style="top:480px">
<div class="cb" style="left:18.0px;top:17px"></div>
<div class="cell" style="left:50px;width:120px;text-align:center;color:#1890ff;font-size:12.5px;letter-spacing:-0.3px">ITEM00000052</div>
<div class="cell" style="left:180px">移液盒盒体</div>
<div class="cell" style="left:362px"></div>
<div class="cell" style="left:473px;width:121px;text-align:center">PCS</div>
<div class="cell" style="left:594px;width:121px;text-align:center">产品</div>
<div class="cell" style="left:715px;width:121px;text-align:center">移液盒盒体</div>
<div class="etag p" style="left:879px">是</div>
<div class="etag d" style="left:1000px">否</div>
<div class="cell" style="left:1078px;width:159px;text-align:center;font-size:14px">2022-05-14 11:25:08</div>
<div class="lnk" style="left:1275px"><svg viewBox="0 0 12 12" style="left:0"><path d="M2.3 10.2L2.2 7.4L6.6 0.6L9.2 2.2L4.8 9Z M2.8 7.6L5.2 8.8" fill="none" stroke="#1890ff" stroke-width="0.9"/><path d="M5.4 10.2H11.8" stroke="#1890ff" stroke-width="1"/></svg><span style="position:absolute;left:13px">修改</span></div>
<div class="lnk" style="left:1324px"><svg viewBox="0 0 12 12" style="left:0"><path d="M1.2 2.7H11M4.3 2.7V0.8H7.9V2.7M2.5 2.7V10.2H9.7V2.7M5.4 4.2V8.2M7.1 4.2V8.2" fill="none" stroke="#1890ff" stroke-width="1"/></svg><span style="position:absolute;left:13px">删除</span></div>
</div>
<div class="row" style="top:529px">
<div class="cb" style="left:18.0px;top:17px"></div>
<div class="cell" style="left:50px;width:120px;text-align:center;color:#1890ff;font-size:12.5px;letter-spacing:-0.3px">ITEM00000053</div>
<div class="cell" style="left:180px">96孔孔板</div>
<div class="cell" style="left:362px"></div>
<div class="cell" style="left:473px;width:121px;text-align:center">PCS</div>
<div class="cell" style="left:594px;width:121px;text-align:center">产品</div>
<div class="cell" style="left:715px;width:121px;text-align:center">孔板</div>
<div class="etag p" style="left:879px">是</div>
<div class="etag d" style="left:1000px">否</div>
<div class="cell" style="left:1078px;width:159px;text-align:center;font-size:14px">2022-05-14 11:25:23</div>
<div class="lnk" style="left:1275px"><svg viewBox="0 0 12 12" style="left:0"><path d="M2.3 10.2L2.2 7.4L6.6 0.6L9.2 2.2L4.8 9Z M2.8 7.6L5.2 8.8" fill="none" stroke="#1890ff" stroke-width="0.9"/><path d="M5.4 10.2H11.8" stroke="#1890ff" stroke-width="1"/></svg><span style="position:absolute;left:13px">修改</span></div>
<div class="lnk" style="left:1324px"><svg viewBox="0 0 12 12" style="left:0"><path d="M1.2 2.7H11M4.3 2.7V0.8H7.9V2.7M2.5 2.7V10.2H9.7V2.7M5.4 4.2V8.2M7.1 4.2V8.2" fill="none" stroke="#1890ff" stroke-width="1"/></svg><span style="position:absolute;left:13px">删除</span></div>
</div>
<div class="row" style="top:578px">
<div class="cb" style="left:18.0px;top:17px"></div>
<div class="cell" style="left:50px;width:120px;text-align:center;color:#1890ff;font-size:12.5px;letter-spacing:-0.3px">ITEM00000054</div>
<div class="cell" style="left:180px">10mm吸头</div>
<div class="cell" style="left:362px"></div>
<div class="cell" style="left:473px;width:121px;text-align:center">PCS</div>
<div class="cell" style="left:594px;width:121px;text-align:center">产品</div>
<div class="cell" style="left:715px;width:121px;text-align:center">吸头</div>
<div class="etag p" style="left:879px">是</div>
<div class="etag d" style="left:1000px">否</div>
<div class="cell" style="left:1078px;width:159px;text-align:center;font-size:14px">2022-05-14 11:27:30</div>
<div class="lnk" style="left:1275px"><svg viewBox="0 0 12 12" style="left:0"><path d="M2.3 10.2L2.2 7.4L6.6 0.6L9.2 2.2L4.8 9Z M2.8 7.6L5.2 8.8" fill="none" stroke="#1890ff" stroke-width="0.9"/><path d="M5.4 10.2H11.8" stroke="#1890ff" stroke-width="1"/></svg><span style="position:absolute;left:13px">修改</span></div>
<div class="lnk" style="left:1324px"><svg viewBox="0 0 12 12" style="left:0"><path d="M1.2 2.7H11M4.3 2.7V0.8H7.9V2.7M2.5 2.7V10.2H9.7V2.7M5.4 4.2V8.2M7.1 4.2V8.2" fill="none" stroke="#1890ff" stroke-width="1"/></svg><span style="position:absolute;left:13px">删除</span></div>
</div>
<div class="row" style="top:627px">
<div class="cb" style="left:18.0px;top:17px"></div>
<div class="cell" style="left:50px;width:120px;text-align:center;color:#1890ff;font-size:12.5px;letter-spacing:-0.3px">ITEM00000055</div>
<div class="cell" style="left:180px">ABS颗粒</div>
<div class="cell" style="left:362px">长度1CM</div>
<div class="cell" style="left:473px;width:121px;text-align:center">KG</div>
<div class="cell" style="left:594px;width:121px;text-align:center">物料</div>
<div class="cell" style="left:715px;width:121px;text-align:center">塑料颗粒</div>
<div class="etag p" style="left:879px">是</div>
<div class="etag d" style="left:1000px">否</div>
<div class="cell" style="left:1078px;width:159px;text-align:center;font-size:14px">2022-05-14 11:30:54</div>
<div class="lnk" style="left:1275px"><svg viewBox="0 0 12 12" style="left:0"><path d="M2.3 10.2L2.2 7.4L6.6 0.6L9.2 2.2L4.8 9Z M2.8 7.6L5.2 8.8" fill="none" stroke="#1890ff" stroke-width="0.9"/><path d="M5.4 10.2H11.8" stroke="#1890ff" stroke-width="1"/></svg><span style="position:absolute;left:13px">修改</span></div>
<div class="lnk" style="left:1324px"><svg viewBox="0 0 12 12" style="left:0"><path d="M1.2 2.7H11M4.3 2.7V0.8H7.9V2.7M2.5 2.7V10.2H9.7V2.7M5.4 4.2V8.2M7.1 4.2V8.2" fill="none" stroke="#1890ff" stroke-width="1"/></svg><span style="position:absolute;left:13px">删除</span></div>
</div>
<div class="row" style="top:676px">
<div class="cb" style="left:18.0px;top:17px"></div>
<div class="cell" style="left:50px;width:120px;text-align:center;color:#1890ff;font-size:12.5px;letter-spacing:-0.3px">ITEM00000056</div>
<div class="cell" style="left:180px">色粉【黑色】</div>
<div class="cell" style="left:362px">珠光黑</div>
<div class="cell" style="left:473px;width:121px;text-align:center">g</div>
<div class="cell" style="left:594px;width:121px;text-align:center">物料</div>
<div class="cell" style="left:715px;width:121px;text-align:center">色粉</div>
<div class="etag p" style="left:879px">是</div>
<div class="etag d" style="left:1000px">否</div>
<div class="cell" style="left:1078px;width:159px;text-align:center;font-size:14px">2022-05-14 11:31:16</div>
<div class="lnk" style="left:1275px"><svg viewBox="0 0 12 12" style="left:0"><path d="M2.3 10.2L2.2 7.4L6.6 0.6L9.2 2.2L4.8 9Z M2.8 7.6L5.2 8.8" fill="none" stroke="#1890ff" stroke-width="0.9"/><path d="M5.4 10.2H11.8" stroke="#1890ff" stroke-width="1"/></svg><span style="position:absolute;left:13px">修改</span></div>
<div class="lnk" style="left:1324px"><svg viewBox="0 0 12 12" style="left:0"><path d="M1.2 2.7H11M4.3 2.7V0.8H7.9V2.7M2.5 2.7V10.2H9.7V2.7M5.4 4.2V8.2M7.1 4.2V8.2" fill="none" stroke="#1890ff" stroke-width="1"/></svg><span style="position:absolute;left:13px">删除</span></div>
</div>
<div class="pg" style="left:1480px">共 10 条</div>
<div class="inp" style="left:1543px;top:752px;width:100px;height:28px;line-height:26px;color:#606266;font-size:13px;padding-left:20px">10条/页<svg class="abs" style="left:82px;top:11px;width:9px;height:5px" viewBox="0 0 9 5"><path d="M0.5 0.5L4.5 4.5L8.5 0.5" fill="none" stroke="#c0c4cc" stroke-width="1"/></svg></div>
<div class="abs" style="left:1663px;top:752px;width:30px;height:28px;background:#f4f4f5;border-radius:2px"><svg class="abs" style="left:12px;top:9px;width:6px;height:10px" viewBox="0 0 6 10"><path d="M5.5 0.5L1 5L5.5 9.5" fill="none" stroke="#c0c4cc" stroke-width="1.2"/></svg></div>
<div class="abs" style="left:1703px;top:752px;width:30px;height:28px;background:#1890ff;border-radius:2px;color:#fff;font-weight:bold;font-size:13px;line-height:28px;text-align:center">1</div>
<div class="abs" style="left:1743px;top:752px;width:30px;height:28px;background:#f4f4f5;border-radius:2px"><svg class="abs" style="left:12px;top:9px;width:6px;height:10px" viewBox="0 0 6 10"><path d="M0.5 0.5L5 5L0.5 9.5" fill="none" stroke="#c0c4cc" stroke-width="1.2"/></svg></div>
<div class="pg" style="left:1802px">前往</div>
<div class="inp" style="left:1832px;top:752px;width:46px;height:28px;line-height:26px;color:#606266;text-align:center">1</div>
<div class="pg" style="left:1882px">页</div>
<div class="abs" style="left:1900px;top:0;width:20px;height:969px;background:linear-gradient(to right,rgba(0,0,0,.004),rgba(0,0,0,.03));z-index:20;pointer-events:none"></div>
</body></html>
